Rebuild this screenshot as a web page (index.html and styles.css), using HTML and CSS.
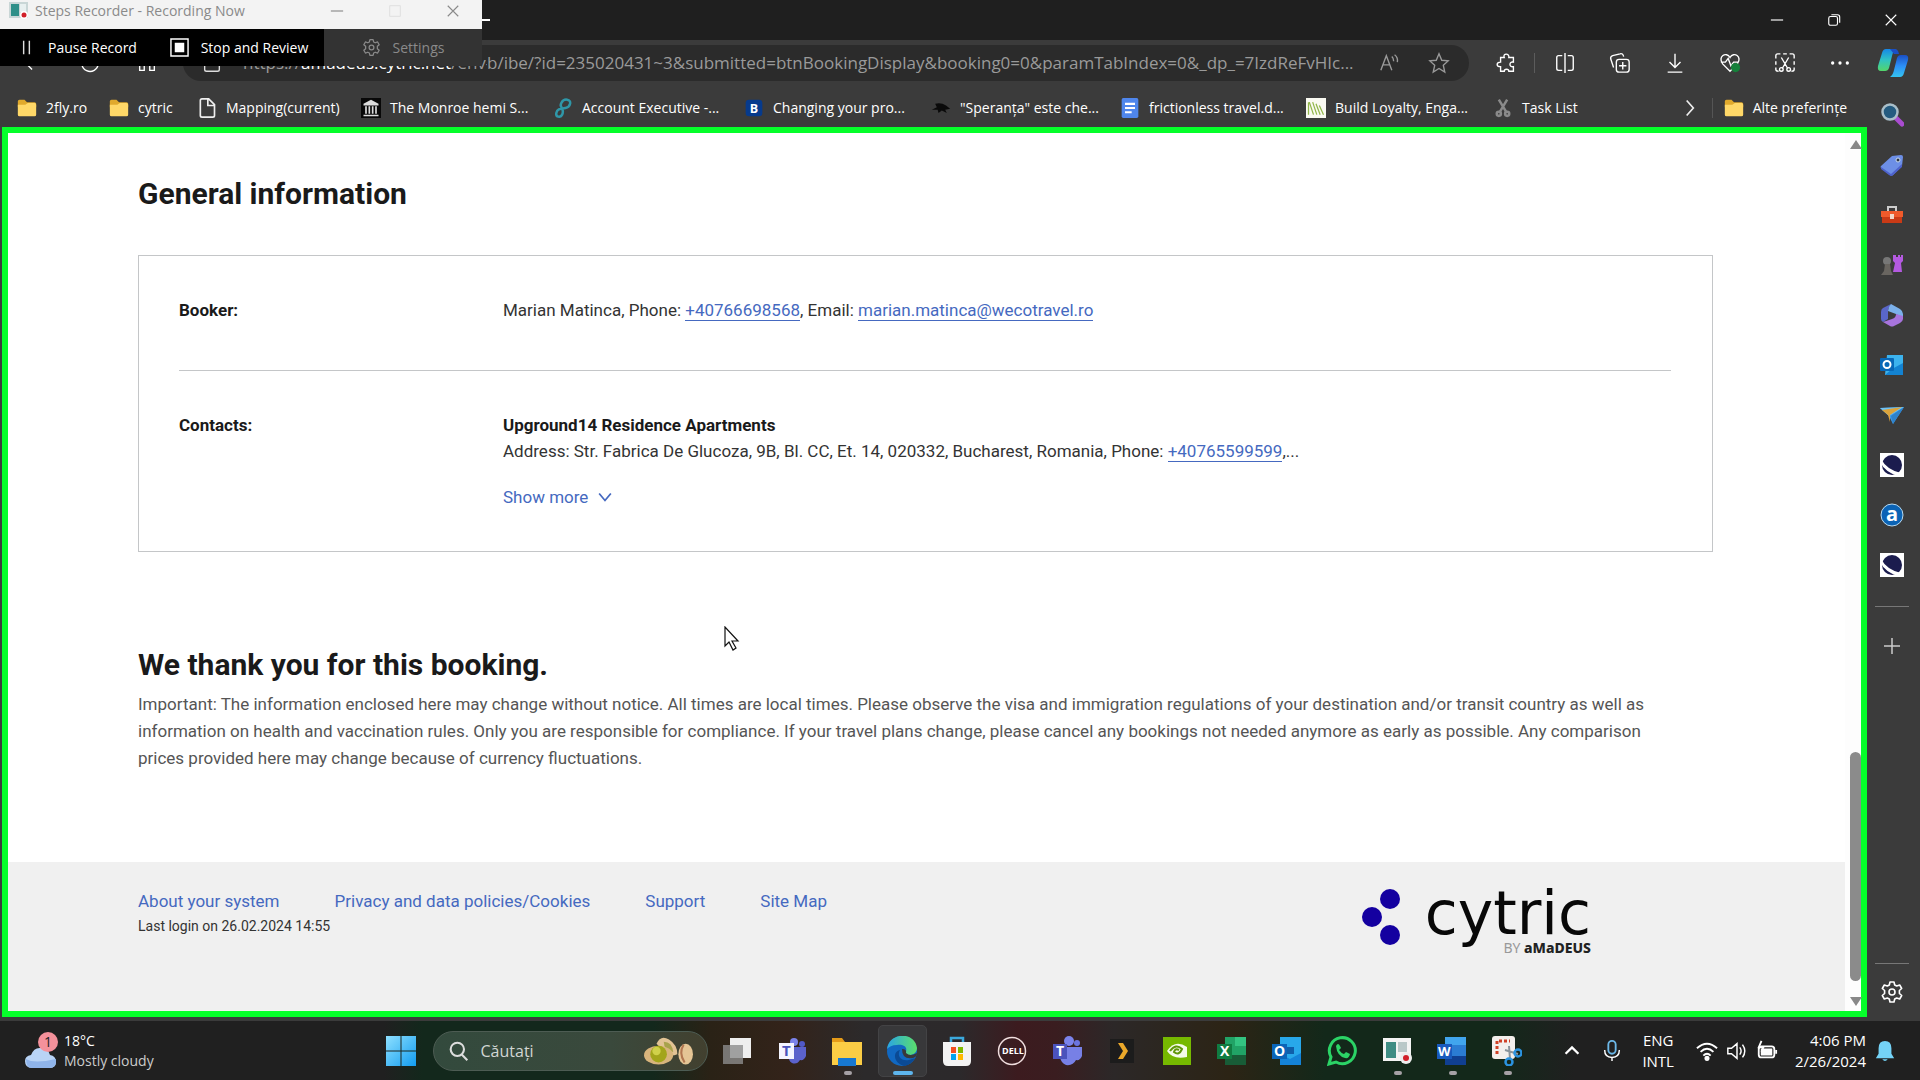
FILE: index.html
```html
<!DOCTYPE html>
<html lang="en">
<head>
<meta charset="utf-8">
<meta name="viewport" content="width=device-width, initial-scale=1">
<title>Booking confirmation</title>
<link rel="stylesheet" href="styles.css">
</head>
<body>
<svg class="sprite" aria-hidden="true">
  <symbol id="folder" viewBox="0 0 24 24"><path d="M1 4q0-2 2-2h6l3 3h9q2 0 2 2v4H1z" fill="#e0a92c"/><path d="M1 8h9l3-2h8q2 0 2 2v12q0 2-2 2H3q-2 0-2-2z" fill="#ffd868"/></symbol>
  <symbol id="gear" viewBox="0 0 24 24"><path d="M10 2h4l.7 3 2 1 3-1 2 3.500-2.300 2v3l2.300 2-2 3.500-3-1-2 1-.7 3h-4l-.7-3-2-1-3 1-2-3.500 2.300-2v-3l-2.300-2 2-3.500 3 1 2-1z" fill="none" stroke="currentColor" stroke-width="1.600" stroke-linejoin="round"/><circle cx="12" cy="12" r="3" fill="none" stroke="currentColor" stroke-width="1.600"/></symbol>
  <symbol id="globe" viewBox="0 0 24 24"><path fill="#fff" d="M0 0h24v24H0z"/><circle cx="12" cy="12" r="10" fill="#1b1c4e"/><path d="M1 6q6 11 20 14l-3 3Q5 19 0 9z" fill="#fff"/></symbol>
  <symbol id="close" viewBox="0 0 16 16"><path d="M2 2l12 12M14 2L2 14" stroke="currentColor" stroke-width="1.300"/></symbol>
  <symbol id="min" viewBox="0 0 16 16"><path d="M1 8h14" stroke="currentColor" stroke-width="1.300"/></symbol>
</svg>
<div class="desktop">
  <header class="titlebar">
    <span class="tab-stub"></span>
    <div class="win-controls">
      <button aria-label="Minimize"><svg class="i14"><use href="#min"/></svg></button>
      <button aria-label="Restore"><svg class="i14" viewBox="0 0 16 16" fill="none" stroke="currentColor" stroke-width="1.300"><rect x="2" y="4" width="10" height="10" rx="2"/><path d="M5 2h7q2.500 0 2.500 2.500V11"/></svg></button>
      <button aria-label="Close"><svg class="i14"><use href="#close"/></svg></button>
    </div>
  </header>

  <nav class="toolbar" aria-label="Browser">
    <div class="nav-buttons">
      <button aria-label="Back"><svg viewBox="0 0 24 24"><path d="M20 12H4M11 5l-7 7 7 7"/></svg></button>
      <button aria-label="Refresh"><svg viewBox="0 0 24 24"><path d="M20 8a9 9 0 1 0 1 5M20 3v5h-5"/></svg></button>
      <button aria-label="Home"><svg viewBox="0 0 24 24"><path d="M4 10l8-7 8 7v10h-5v-6H9v6H4z"/></svg></button>
    </div>
    <div class="address">
      <svg viewBox="0 0 24 24" class="i20 lock"><rect x="4" y="9" width="16" height="12" rx="2"/><path d="M8 9V6a4 4 0 0 1 8 0v3"/></svg>
      <span class="url-host">https://<b>amadeus.cytric.net</b>/env-</span>
      <span class="url-path">b/ibe/?id=235020431~3&amp;submitted=btnBookingDisplay&amp;booking0=0&amp;paramTabIndex=0&amp;_dp_=7IzdReFvHIc...</span>
      <button aria-label="Read aloud"><svg viewBox="0 0 24 24"><path d="M2 20L8 4l6 16M4 14h8M14 5q2 2 2 5M17 3q4 3 3 8"/></svg></button>
      <button aria-label="Favourite"><svg viewBox="0 0 24 24"><path d="M12 2l3 7 7 .7-5.300 4.800L18.300 22 12 18l-6.300 4 1.600-7.500L2 9.700 9 9z"/></svg></button>
    </div>
    <div class="tools">
      <button aria-label="Extensions"><svg viewBox="0 0 24 24"><path d="M5 6h4c-2-5 6-5 5 0h5v5c-5-1-5 6 0 5v5h-5c0-3-5-3-5 0H5v-5c-5 0-5-5 0-5z"/></svg></button>
      <span class="sep"></span>
      <button aria-label="Split screen"><svg viewBox="0 0 24 24"><path d="M9 4H5q-2 0-2 2v12q0 2 2 2h4M15 4h4q2 0 2 2v12q0 2-2 2h-4M12 1v22"/></svg></button>
      <button aria-label="Collections"><svg viewBox="0 0 24 24"><rect x="8" y="8" width="14" height="14" rx="3"/><path d="M15 11v8M11 15h8M5 17l-3-9q-1-3 2-4l8-2q3-1 4 3"/></svg></button>
      <button aria-label="Downloads"><svg viewBox="0 0 24 24"><path d="M12 2v15M6 11l6 6 6-6M4 22h16"/></svg></button>
      <button aria-label="Performance"><svg viewBox="0 0 24 24"><path d="M12 21L4 13C-2 5 8-1 12 6c4-7 14-1 8 7zM2 11h5l3-4 3 8 3-4h5"/><circle cx="18" cy="17" r="5" fill="#16803a" stroke="none"/></svg></button>
      <button aria-label="Screenshot"><svg viewBox="0 0 24 24"><path d="M2 7V4q0-2 2-2h3M10 2h4M17 2h3q2 0 2 2v3M2 10v4M22 10v4M2 17v2q0 2 3 2M22 17v2q0 2-3 2M8 6l7 12M16 6L9 18"/><circle cx="8" cy="19" r="2"/><circle cx="16" cy="19" r="2"/></svg></button>
      <button aria-label="More"><svg viewBox="0 0 24 24"><g fill="currentColor" stroke="none"><circle cx="4" cy="12" r="1.800"/><circle cx="12" cy="12" r="1.800"/><circle cx="20" cy="12" r="1.800"/></g></svg></button>
      <button class="copilot" aria-label="Copilot"><svg viewBox="0 0 32 32"><defs><linearGradient id="cpa" x2="0" y2="1"><stop stop-color="#1687e8"/><stop offset=".5" stop-color="#2fc3c4"/><stop offset="1" stop-color="#54d66a"/></linearGradient><linearGradient id="cpb" x2="0" y2="1"><stop stop-color="#1a4fc4"/><stop offset=".5" stop-color="#2c8ff6"/><stop offset="1" stop-color="#35c4f0"/></linearGradient></defs><g stroke="none"><path d="M9 2h10q-3 2-4 7l-3 12q-1 3-4 3H4q-4 0-3-5L5 6q1-4 4-4z" fill="url(#cpa)"/><path d="M23 30H13q3-2 4-7l3-12q1-3 4-3h4q4 0 3 5l-4 13q-1 4-4 4z" fill="url(#cpb)"/><path d="M13 2h5q3 0 4 5H17z" fill="#1a4fc4"/></g></svg></button>
    </div>
  </nav>

  <div class="browser">
    <div class="window">
      <nav class="bookmarks" aria-label="Bookmarks">
        <a href="#"><svg><use href="#folder"/></svg>2fly.ro</a>
        <a href="#"><svg><use href="#folder"/></svg>cytric</a>
        <a href="#"><svg viewBox="0 0 24 24" fill="none" stroke="#eee" stroke-width="2"><path d="M4 3q0-2 2-2h8l7 7v13q0 2-2 2H6q-2 0-2-2zM13 1v8h8"/></svg>Mapping(current)</a>
        <a href="#"><svg viewBox="0 0 24 24"><path d="M0 0h24v24H0z" fill="#080808"/><path d="M3 7l9-5 9 5v2H3zM5 10h2v9H5zm4 0h2v9H9zm4 0h2v9h-2zm4 0h2v9h-2zM3 20h18v2H3z" fill="#ddd"/></svg>The Monroe hemi S...</a>
        <a href="#"><svg viewBox="0 0 24 24" fill="none" stroke-width="3"><path d="M11 12C7 9 11 1 17 2s4 9-2 10-10 1-11 6 5 6 7 2 0-6 0-8" stroke="#2f97a8"/></svg>Account Executive -...</a>
        <a href="#"><svg viewBox="0 0 24 24"><rect x="2" y="2" width="20" height="20" rx="4" fill="#063a8c"/><text x="7" y="18" font-size="15" font-weight="700" fill="#fff">B</text></svg>Changing your pro...</a>
        <a href="#"><svg viewBox="0 0 24 24"><path d="M1 14l6-3-2-4q7-2 13 2l5 4-6 1 2 4-6-3-4 3-1-4z" fill="#0a0a0a"/></svg>"Speranța" este che...</a>
        <a href="#"><svg viewBox="0 0 24 24"><rect x="2" width="20" height="24" rx="2" fill="#4f86ec"/><path d="M6 7h12M6 12h12M6 17h8" stroke="#fff" stroke-width="2.500"/></svg>frictionless travel.d...</a>
        <a href="#"><svg viewBox="0 0 24 24"><path d="M0 0h24v24H0z" fill="#fafaf2"/><path d="M3 20V5M4 5l5 15M8 5l5 15M12 7l5 13M16 9l5 11" fill="none" stroke="#91b64a" stroke-width="1.500"/></svg>Build Loyalty, Enga...</a>
        <a href="#"><svg viewBox="0 0 24 24" fill="none" stroke="#8a8a8a" stroke-width="3"><path d="M7 2l9 15M17 2L8 17"/><circle cx="7" cy="19" r="2.500"/><circle cx="17" cy="19" r="2.500"/></svg>Task List</a>
        <button class="more" aria-label="More bookmarks"><svg viewBox="0 0 24 24" fill="none" stroke="#eee" stroke-width="2"><path d="M8 3l8 9-8 9"/></svg></button>
        <a href="#" class="others"><svg><use href="#folder"/></svg>Alte preferințe</a>
      </nav>

      <div class="viewport">
        <div class="page">
          <main class="content">
            <h1>General information</h1>
            <dl class="card">
              <div class="entry">
                <dt>Booker:</dt>
                <dd>Marian Matinca, Phone: <a href="tel:+40766698568">+40766698568</a>, Email: <a href="mailto:marian.matinca@wecotravel.ro">marian.matinca@wecotravel.ro</a></dd>
              </div>
              <div class="entry">
                <dt>Contacts:</dt>
                <dd><strong>Upground14 Residence Apartments</strong><br>Address: Str. Fabrica De Glucoza, 9B, Bl. CC, Et. 14, 020332, Bucharest, Romania, Phone: <a href="tel:+40765599599">+40765599599</a>,...
                  <button class="show-more">Show more <svg viewBox="0 0 12 12"><path d="M1 3l5 6 5-6" fill="none" stroke="currentColor" stroke-width="1.500"/></svg></button>
                </dd>
              </div>
            </dl>
            <h2>We thank you for this booking.</h2>
            <p class="notice">Important: The information enclosed here may change without notice. All times are local times. Please observe the visa and immigration regulations of your destination and/or transit country as well as information on health and vaccination rules. Only you are responsible for compliance. If your travel plans change, please cancel any bookings not needed anymore as early as possible. Any comparison prices provided here may change because of currency fluctuations.</p>
          </main>
          <footer class="footer">
            <div>
              <nav class="links" aria-label="Footer"><a href="#">About your system</a><a href="#">Privacy and data policies/Cookies</a><a href="#">Support</a><a href="#">Site Map</a></nav>
              <p class="login">Last login on 26.02.2024 14:55</p>
            </div>
            <div class="brand">
              <svg class="dots" viewBox="0 0 40 58" fill="#1400a0"><circle cx="29" cy="11" r="10"/><circle cx="11" cy="29" r="10"/><circle cx="29" cy="47" r="10"/></svg>
              <div class="wordmark"><span class="name">cytric</span><span class="by">BY <b>aMaDEUS</b></span></div>
            </div>
          </footer>
        </div>
        <div class="scrollbar"><i class="up"></i><i class="thumb"></i><i class="down"></i></div>
      </div>
    </div>

    <aside class="sidebar" aria-label="Browser sidebar">
      <button aria-label="Search"><svg viewBox="0 0 24 24"><path d="M15 14l7 7" stroke="#a94cd0" stroke-width="5" stroke-linecap="round"/><circle cx="10" cy="9" r="7.500" fill="#245b80" stroke="#a9bec9" stroke-width="2.500"/></svg></button>
      <button aria-label="Shopping"><svg viewBox="0 0 24 24"><path d="M1 13L12 3l9-1q2 0 2 2l-1 9-9 9q-2 1-3 0l-9-7q-1-1 0-2z" fill="#6d8fe6"/><path d="M1 14l10 7 11-10v3l-10 9q-2 0-3-1l-8-6z" fill="#4e62cc"/><circle cx="18" cy="7" r="2" fill="#2d3445" stroke="#c9dcef"/></svg></button>
      <button aria-label="Tools"><svg viewBox="0 0 24 24"><path d="M8 8V4h8v4" fill="none" stroke="#ccc" stroke-width="2"/><path d="M1 8h22v6H1z" fill="#ef5a2b"/><path d="M2 14h20v6H2z" fill="#c93a16"/><path d="M10 11h4v5h-4z" fill="#f1d7c8"/></svg></button>
      <button aria-label="Games"><svg viewBox="0 0 24 24"><circle cx="7" cy="8" r="4" fill="#777"/><path d="M5 11h5l1 7 2 4H1l3-4z" fill="#696560"/><path d="M13 2h3v2h2V2h2v2h1V2h2v6l-2 2 1 9h-9l2-9-2-2z" fill="#b45ae0"/></svg></button>
      <button aria-label="Microsoft 365"><svg viewBox="0 0 24 24"><path d="M11 1L3 5q-2 1-2 4v7q0 2 2 3l5-3V8q0-3 3-7z" fill="#5966c8"/><path d="M11 1l9 5q3 2 3 5v4l-7-4-8-3q0-4 3-7z" fill="#7bb0ea"/><path d="M23 13v3q0 2-3 4l-6 3q-2 1-4 0l-7-4 9-3q4-1 4-5z" fill="#a774dd"/></svg></button>
      <button aria-label="Outlook"><svg viewBox="0 0 24 24"><path d="M7 2h16v20H5z" fill="#3cb3ee"/><path d="M12 16l11-6v12H5z" fill="#1383d2"/><rect y="5" width="14" height="13" rx="1" fill="#0868b7"/><circle cx="7" cy="11.500" r="3.500" fill="none" stroke="#fff" stroke-width="2"/></svg></button>
      <button aria-label="Drop"><svg viewBox="0 0 24 24"><path d="M0 5l24-1-11 17-4-8z" fill="#3f9be6"/><path d="M0 5l24-1L9 13z" fill="#6ec3f6"/><path d="M2 7l20-3L10 12v7l-2-7z" fill="#dba33b"/><path d="M24 4L11 13l2 8z" fill="#2d82cc"/></svg></button>
      <button aria-label="Travel site"><svg><use href="#globe"/></svg></button>
      <button aria-label="Amadeus"><svg viewBox="0 0 24 24"><circle cx="12" cy="12" r="11" fill="#0b63b5" stroke="#b8daf0"/><text x="6" y="18" font-size="20" font-weight="700" fill="#fff">a</text></svg></button>
      <button aria-label="Travel site"><svg><use href="#globe"/></svg></button>
      <hr>
      <button class="add" aria-label="Add"><svg viewBox="0 0 24 24"><path d="M12 4v16M4 12h16" stroke="#ccc" stroke-width="1.500"/></svg></button>
      <hr class="low">
      <button class="settings" aria-label="Settings"><svg><use href="#gear"/></svg></button>
    </aside>
  </div>

  <footer class="taskbar">
    <button class="weather">
      <svg viewBox="0 0 34 38"><path d="M8 36q-7 0-7-7 0-5 6-6 3-8 10-7 7 0 9 7 6 1 6 7 0 6-7 6z" fill="#b9d4f6"/><path d="M2 27q8 5 30 0 1 9-7 9H8q-6 0-6-9z" fill="#8fb4ea"/><circle cx="24" cy="10" r="10" fill="#f4919b"/><text x="20" y="15" font-size="14" fill="#222">1</text></svg>
      <span>18°C<br><em>Mostly cloudy</em></span>
    </button>
    <div class="apps">
      <button class="start" aria-label="Start"><svg viewBox="0 0 30 30"><defs><linearGradient id="win" x2="1" y2="1"><stop stop-color="#8ee0ff"/><stop offset="1" stop-color="#129cf0"/></linearGradient></defs><path d="M0 0h14.500v14.500H0zM15.500 0H30v14.500H15.500zM0 15.500h14.500V30H0zM15.500 15.500H30V30H15.500z" fill="url(#win)"/></svg></button>
      <label class="search">
        <svg class="i20" viewBox="0 0 24 24" fill="none" stroke="#ddd" stroke-width="2.500"><circle cx="10" cy="10" r="8"/><path d="M15 16l7 7"/></svg>
        <input type="text" placeholder="Căutați" aria-label="Căutați">
        <svg class="nuts" viewBox="0 0 48 28"><path d="M12 7Q16-2 24 3t8 14q-8 3-12-2z" fill="#e2c394"/><path d="M19 5q8 0 9 10-9-1-9-10z" fill="#a8a24b"/><ellipse cx="14" cy="18" rx="14" ry="9" fill="#d8b47c"/><circle cx="14" cy="17" r="8" fill="#a3a51b"/><circle cx="12" cy="14" r="4" fill="#d0d14a"/><ellipse cx="40" cy="17" rx="7" ry="10" fill="#e5c595"/><path d="M38 8q-5 8 1 17" stroke="#b27650" stroke-width="2" fill="none"/></svg>
      </label>
      <button class="app" aria-label="Task view"><svg viewBox="0 0 30 30"><path d="M8 2h21v20H8z" fill="#eee"/><path d="M1 9h20v19H1z" fill="#8c8c8c" opacity=".8"/></svg></button>
      <button class="app" aria-label="Teams"><svg viewBox="0 0 30 30"><circle cx="17" cy="6" r="4" fill="#7b83eb"/><circle cx="25" cy="8" r="3" fill="#5059c9"/><path d="M12 11h17v9q-2 5-6 4-3 5-8 3-4-2-3-8z" fill="#5b62cc"/><path d="M2 7h15v16H2z" fill="#f4f4ff"/><text x="5" y="20" font-size="15" font-weight="700" fill="#4b53bc">T</text></svg></button>
      <button class="app open" aria-label="File Explorer"><svg viewBox="0 0 30 30"><path d="M0 2h10l3 4h14v7H0z" fill="#e59b18"/><path d="M0 6h30v23H0z" fill="#fbcd45"/><path d="M6 22h18v8H6z" fill="#1778d1"/></svg></button>
      <button class="app open active" aria-label="Edge"><svg viewBox="0 0 30 30"><defs><linearGradient id="edg"><stop stop-color="#2aa5e4"/><stop offset="1" stop-color="#5be06b"/></linearGradient></defs><circle cx="15" cy="15" r="15" fill="#1168c1"/><path d="M0 13C2-4 28-5 30 12c0 7-9 9-12 5 4-6-2-9-8-8-5 0-8 2-10 4z" fill="url(#edg)"/><path d="M13 14c-4 7 3 13 12 9l3-1q-3 6-10 8C8 29 4 16 13 14z" fill="#0b4a94"/><path d="M15 13q5 0 4 4 4 4 11 0 0 4-4 5-11 2-11-9z" fill="#38383a"/></svg></button>
      <button class="app" aria-label="Store"><svg viewBox="0 0 30 30"><path d="M9 8V2h12v6" fill="none" stroke="#3ba9dd" stroke-width="2.500"/><path d="M1 6h28v19q0 5-5 5H6q-5 0-5-5z" fill="#f3f3f3"/><path d="M9 11h5v6H9z" fill="#f25022"/><path d="M16 11h5v6h-5z" fill="#7fba00"/><path d="M9 18h5v6H9z" fill="#00a4ef"/><path d="M16 18h5v6h-5z" fill="#ffb900"/></svg></button>
      <button class="app" aria-label="Dell"><svg viewBox="0 0 30 30"><circle cx="15" cy="15" r="13.500" fill="none" stroke="#f0dede" stroke-width="1.500"/><text x="5" y="18" font-size="9" font-weight="700" fill="#fff">DELL</text></svg></button>
      <button class="app" aria-label="Teams"><svg viewBox="0 0 30 30"><circle cx="17" cy="5" r="5" fill="#7b83eb"/><circle cx="25" cy="7" r="3" fill="#6b74df"/><path d="M8 11h22v9q-2 5-6 4-3 6-10 5-5-2-6-8z" fill="#7780e6"/><path d="M1 8h14v15H1z" fill="#4b53bc"/><text x="4" y="20" font-size="14" font-weight="700" fill="#fff">T</text></svg></button>
      <button class="app" aria-label="Plex"><svg viewBox="0 0 30 30"><path d="M3 3h24v24H3z" fill="#1c1c1c"/><path d="M11 7h5l5 8-5 8h-5l5-8z" fill="#eba82a"/></svg></button>
      <button class="app" aria-label="NVIDIA"><svg viewBox="0 0 30 30"><path d="M1 1h28v28H1z" fill="#76b900"/><path d="M5 15q8-12 20-4v10q-14 3-20-6z" fill="#f5fbe9"/><path d="M8 15q6-8 12-2-3 7-8 3 1-4 5-2" fill="none" stroke="#5f9608" stroke-width="2"/></svg></button>
      <button class="app" aria-label="Excel"><svg viewBox="0 0 30 30"><path d="M8 1h21v28H8z" fill="#21a366"/><path d="M18 1h11v9H18z" fill="#33c481"/><path d="M8 19h21v10H8z" fill="#185c37"/><path d="M0 8h15v15H0z" fill="#107c41"/><text x="3" y="20" font-size="14" font-weight="700" fill="#fff">X</text></svg></button>
      <button class="app" aria-label="Outlook"><svg viewBox="0 0 30 30"><path d="M8 1h21v28H8z" fill="#28a8ea"/><path d="M8 11h14v7H8z" fill="#0f5faa"/><path d="M8 18l10 5 11-6v12H8z" fill="#1483d8"/><path d="M0 8h15v15H0z" fill="#0a64b8"/><text x="2" y="20" font-size="14" font-weight="700" fill="#fff">O</text></svg></button>
      <button class="app" aria-label="WhatsApp"><svg viewBox="0 0 30 30"><path d="M2 28l2-7a13 13 0 1 1 5 5z" fill="none" stroke="#2bd366" stroke-width="3"/><path d="M9 10q2-4 4 0l1 2-2 2q2 3 5 4l2-2 4 2q-1 5-5 4-8-2-9-12z" fill="#2bd366"/></svg></button>
      <button class="app open" aria-label="Steps Recorder"><svg viewBox="0 0 30 30"><path d="M1 2h28v23H1z" fill="#f4f4f4"/><path d="M4 6h10v16H4z" fill="#3f8d84"/><path d="M16 6h9v10h-9z" fill="#b9c8c8"/><circle cx="24" cy="22" r="6" fill="#eee"/><circle cx="24" cy="22" r="3" fill="#d1202a"/></svg></button>
      <button class="app open" aria-label="Word"><svg viewBox="0 0 30 30"><path d="M8 1h21v28H8z" fill="#2b7cd3"/><path d="M8 1h21v8H8z" fill="#41a5ee"/><path d="M8 20h21v9H8z" fill="#103f91"/><path d="M0 8h15v15H0z" fill="#185abd"/><text x="1" y="20" font-size="13" font-weight="700" fill="#fff">W</text></svg></button>
      <button class="app open" aria-label="Snipping Tool"><svg viewBox="0 0 30 30"><rect width="23" height="23" rx="3" fill="#f3efec"/><path d="M5 18V5h13" fill="none" stroke="#d04126" stroke-width="3" stroke-dasharray="3 2"/><path d="M13 14l13 4M17 10l1 13" stroke="#8a949b" stroke-width="2"/><g fill="none" stroke="#2b93e0" stroke-width="2.500"><circle cx="26" cy="17" r="3.500"/><circle cx="17" cy="26" r="3.500"/></g></svg></button>
    </div>
    <div class="tray">
      <button aria-label="Hidden icons"><svg viewBox="0 0 24 24"><path d="M5 15l7-7 7 7" stroke-width="2.500"/></svg></button>
      <button class="mic" aria-label="Microphone"><svg viewBox="0 0 24 24"><rect x="8" y="1" width="8" height="14" rx="4" stroke="#6cb8e8" stroke-width="2"/><path d="M4 11q0 8 8 8t8-8M12 19v4"/></svg></button>
      <button class="lang">ENG<br>INTL</button>
      <button class="status" aria-label="Network, volume and battery">
        <svg viewBox="0 0 24 24"><path d="M1 9q11-10 22 0M5 13q7-7 14 0M8 17q4-4 8 0" stroke-width="2"/><circle cx="12" cy="20" r="2" fill="#fff"/></svg>
        <svg viewBox="0 0 24 24"><path d="M2 9h4l6-5v16l-6-5H2zM15 8q3 4 0 8M18 5q5 7 0 14"/></svg>
        <svg viewBox="0 0 24 24"><rect x="3" y="7" width="17" height="12" rx="3" stroke-width="2"/><path d="M6 10h11v6H6z" fill="#fff"/><path d="M22 11v4M6 1L3 8h5L6 13" stroke-width="2"/></svg>
      </button>
      <button class="clock">4:06 PM<br>2/26/2024</button>
      <button class="bell" aria-label="Notifications"><svg viewBox="0 0 24 24"><path d="M12 1q7 0 7 8v6l3 5H2l3-5V9q0-8 7-8zM9 21h6q-3 4-6 0z"/></svg></button>
    </div>
  </footer>

  <section class="recorder" aria-label="Steps Recorder">
    <div class="rec-title">
      <svg viewBox="0 0 20 20" class="i20"><path d="M0 1h19v16H0z" fill="#c9d6d6"/><path d="M2 3h8v12H2z" fill="#2f8f88"/><path d="M11 3h6v8h-6z" fill="#e8f0f0"/><circle cx="15" cy="14" r="4" fill="#fff"/><circle cx="15" cy="14" r="2.500" fill="#d1202a"/></svg>
      <span>Steps Recorder - Recording Now</span>
      <button aria-label="Minimize"><svg class="i14"><use href="#min"/></svg></button>
      <button aria-label="Maximize" disabled><svg class="i14" viewBox="0 0 16 16"><rect x="2" y="2" width="12" height="12" fill="none" stroke="#ddd"/></svg></button>
      <button aria-label="Close"><svg class="i14"><use href="#close"/></svg></button>
    </div>
    <div class="rec-actions">
      <button class="pause"><svg viewBox="0 0 20 20"><path d="M7 3v14M13 3v14" stroke="#ddd" stroke-width="1.500"/></svg>Pause Record</button>
      <button class="stop"><svg viewBox="0 0 20 20"><path d="M1 1h18v18H1z" fill="none" stroke="#fff" stroke-width="1.500"/><path d="M5 5h10v10H5z" fill="#fff"/></svg>Stop and Review</button>
      <button class="conf" disabled><svg><use href="#gear"/></svg>Settings</button>
    </div>
  </section>
  <svg class="cursor" viewBox="0 0 16 25" aria-hidden="true"><path d="M1 1v19l4-4 4 8 3-2-4-7h6z" fill="#fff" stroke="#111" stroke-width="1.200"/></svg>
</div>
</body>
</html>
```
FILE: styles.css
```css
* { box-sizing: border-box; }
body {
  margin: 0;
  background: #3b3b3b;
  color: #fff;
  font: 14px/20px "Open Sans", "Noto Sans", sans-serif;
}
button {
  display: flex;
  align-items: center;
  justify-content: center;
  flex: none;
  margin: 0;
  padding: 0;
  border: 0;
  background: none;
  color: inherit;
  font: inherit;
}
a { color: inherit; text-decoration: none; }
svg { display: block; flex: none; }
.sprite { position: absolute; width: 0; height: 0; }
.i14 { width: 14px; height: 14px; }
.i20 { width: 20px; height: 20px; }
.desktop {
  position: relative;
  display: flex;
  flex-direction: column;
  min-height: 100vh;
}

/* Title bar and toolbar */
.titlebar {
  display: flex;
  align-items: center;
  justify-content: space-between;
  height: 40px;
  background: #1f1f1f;
}
.tab-stub { width: 8px; height: 2px; margin-left: 482px; background: #fff; }
.win-controls { display: flex; padding-right: 1px; }
.win-controls button { width: 57px; height: 38px; }
.toolbar {
  display: flex;
  align-items: center;
  height: 46px;
  padding-right: 2px;
}
.toolbar svg { fill: none; stroke: currentColor; stroke-width: 1.5; width: 22px; height: 22px; }
.nav-buttons { display: flex; width: 183px; padding-left: 4px; }
.nav-buttons button { width: 57px; }
.address {
  display: flex;
  align-items: center;
  flex: 1;
  min-width: 0;
  height: 36px;
  padding: 0 6px 0 18px;
  border-radius: 18px;
  background: #2b2b2b;
  color: #9a9a9a;
  font-size: 17px;
  white-space: nowrap;
}
.address .lock { margin-right: 20px; color: #ddd; }
.url-host { flex: none; width: 244px; overflow: hidden; }
.url-host b { color: #fff; font-weight: 400; }
.url-path { flex: 1; min-width: 0; overflow: hidden; }
.address button { width: 49px; }
.tools { display: flex; align-items: center; padding-left: 10px; }
.tools button { width: 55px; }
.sep { width: 1px; height: 20px; margin-right: 2px; background: #5c5c5c; }
.tools .copilot { width: 51px; }
.toolbar .copilot svg { width: 32px; height: 32px; }

.browser { display: flex; flex: 1; }
.window { display: flex; flex: 1; min-width: 0; flex-direction: column; }

/* Bookmarks */
.bookmarks {
  display: grid;
  grid-template-columns: 92px 88px 164px 192px 191px 187px 189px 186px 187px auto 1fr auto;
  align-items: center;
  height: 41px;
  padding: 2px 20px 0 17px;
  overflow: hidden;
  white-space: nowrap;
}
.bookmarks a { display: flex; align-items: center; gap: 9px; }
.bookmarks svg { width: 20px; height: 20px; }
.bookmarks .more { justify-self: end; margin-right: 12px; }
.bookmarks .others { padding-left: 11px; border-left: 1px solid #555; }

/* Page */
.viewport {
  display: flex;
  flex: 1;
  margin: 0 0 4px 2px;
  border: 6px solid #05ff2a;
  background: #fff;
}
.page {
  display: flex;
  flex: 1;
  min-width: 0;
  flex-direction: column;
  color: #333;
  font: 17px/26px Roboto, sans-serif;
}
.page a, .show-more { color: #4569c0; }
.content { flex: 1; padding: 41px 132px 0 130px; }
h1, h2 { margin: 0; color: #1a1a1a; font-size: 30px; line-height: 40px; font-weight: 700; }
.card { margin: 41px 0 93px; padding: 0 41px 0 40px; border: 1px solid #c4c6c8; }
.entry { display: grid; grid-template-columns: 324px 1fr; padding: 41px 0 47px; }
.entry + .entry { padding-bottom: 41px; border-top: 1px solid #c4c6c8; }
.entry dt, .entry strong { color: #1a1a1a; font-weight: 700; }
.entry dd { margin: 0; }
.entry dd a { border-bottom: 1px solid #4569c0; }
.show-more { gap: 10px; margin-top: 20px; }
.show-more svg { width: 14px; height: 14px; }
.notice { max-width: 1540px; margin: 6px 0 40px; color: #555; line-height: 27px; }
.footer {
  display: flex;
  justify-content: space-between;
  min-height: 149px;
  padding: 26px 254px 20px 130px;
  background: #f0f0f0;
}
.links { display: flex; gap: 55px; }
.login { margin: 2px 0 0; font-size: 14px; line-height: 20px; }
.brand { display: flex; gap: 24px; }
.dots { width: 40px; height: 58px; }
.wordmark { display: flex; flex-direction: column; align-items: flex-end; color: #080808; }
.name { font: 60px/50px "DejaVu Sans", sans-serif; }
.by { color: #999; font: 14px/20px "Noto Sans", sans-serif; }
.by b { color: #222; font-weight: 800; }
.scrollbar { display: flex; flex-direction: column; width: 16px; padding: 7px 0 5px 5px; background: #fdfdfd; }
.up, .down { border: 6px solid transparent; border-top-width: 0; border-bottom: 9px solid #888; }
.down { border-width: 9px 6px 0; border-color: #888 transparent transparent; }
.thumb { height: 229px; margin: auto 0 16px; border-radius: 6px; background: #8b8b8b; }

/* Sidebar */
.sidebar {
  display: flex;
  flex-direction: column;
  align-items: center;
  width: 53px;
  padding: 4px 3px 0 0;
}
.sidebar button { width: 48px; height: 50px; }
.sidebar svg { width: 24px; height: 24px; }
.sidebar hr { width: 34px; height: 1px; margin: 16px 0 14px; border: 0; background: #777; }
.sidebar .low { margin: auto 0 3px; }
.sidebar .settings { margin-bottom: 4px; }

/* Taskbar */
.taskbar {
  display: grid;
  grid-template-columns: 1fr auto 1fr;
  align-items: center;
  height: 59px;
  background: linear-gradient(90deg, #202020 20%, #13281c 22%, #13281c 34%, #2a2216 37%, #33231a 41%, #2c2a2b 45%, #2c292b 50%, #3c1b1f 53%, #3a1d20 55%, #2c2828 58%, #2c2415 64%, #13281a 69%, #13281a 78%, #202020 82%);
}
.weather { justify-content: flex-start; gap: 6px; padding-left: 24px; line-height: 20px; text-align: left; }
.weather svg { width: 34px; height: 38px; }
.weather em { color: #ccc; font-style: normal; }
.apps { display: flex; align-items: center; }
.start { margin-right: 17px; }
.start svg { width: 30px; height: 30px; }
.search {
  display: flex;
  align-items: center;
  gap: 10px;
  width: 275px;
  height: 40px;
  margin-right: 2px;
  padding: 0 13px 0 15px;
  border: 1px solid #4d5c53;
  border-radius: 20px;
  background: linear-gradient(90deg, #334a3d, #3a493c 65%, #42402f);
}
.search input { flex: 1; min-width: 0; border: 0; background: none; color: #ddd; font: 16px/20px "Open Sans", "Noto Sans", sans-serif; }
.search input::placeholder { color: #d2d6d3; opacity: 1; }
.nuts { width: 50px; height: 30px; }
.app { position: relative; width: 55px; height: 52px; }
.app svg { width: 30px; height: 30px; }
.active::before { content: ""; position: absolute; inset: 0 3px; border: 1px solid #434345; border-radius: 5px; background: #38383a; }
.active svg { position: relative; }
.open::after { content: ""; position: absolute; bottom: 2px; left: 24px; width: 8px; height: 4px; border-radius: 2px; background: #a5a0a5; }
.active::after { left: 18px; width: 20px; background: #5eb5ed; }
.tray { display: flex; align-items: center; justify-content: flex-end; padding-right: 24px; }
.tray svg { width: 22px; height: 22px; fill: none; stroke: #fff; stroke-width: 1.6; }
.tray .bell svg { fill: #74d3f7; stroke: none; }
.tray .mic { margin-left: 18px; }
.lang, .clock { font-size: 15px; line-height: 21px; }
.lang { margin-left: 19px; }
.status { gap: 8px; margin: 0 17px 0 22px; }
.clock { text-align: right; }
.bell { margin-left: 8px; }

/* Steps Recorder window over the browser */
.recorder { position: absolute; top: 0; left: 0; width: 482px; }
.rec-title { display: flex; align-items: center; height: 29px; padding: 0 0 8px 9px; background: #f3f3f3; color: #8a8a8a; }
.rec-title span { flex: 1; margin-left: 6px; white-space: nowrap; }
.rec-title button { width: 58px; }
.rec-actions { display: flex; height: 37px; background: #000; }
.rec-actions button { gap: 12px; white-space: nowrap; }
.rec-actions svg { width: 19px; height: 19px; }
.pause { width: 154px; }
.stop { width: 170px; }
.rec-actions .conf { flex: 1; background: #333; color: #8a8a8a; }
.cursor { position: absolute; top: 626px; left: 724px; width: 16px; height: 25px; }
```
